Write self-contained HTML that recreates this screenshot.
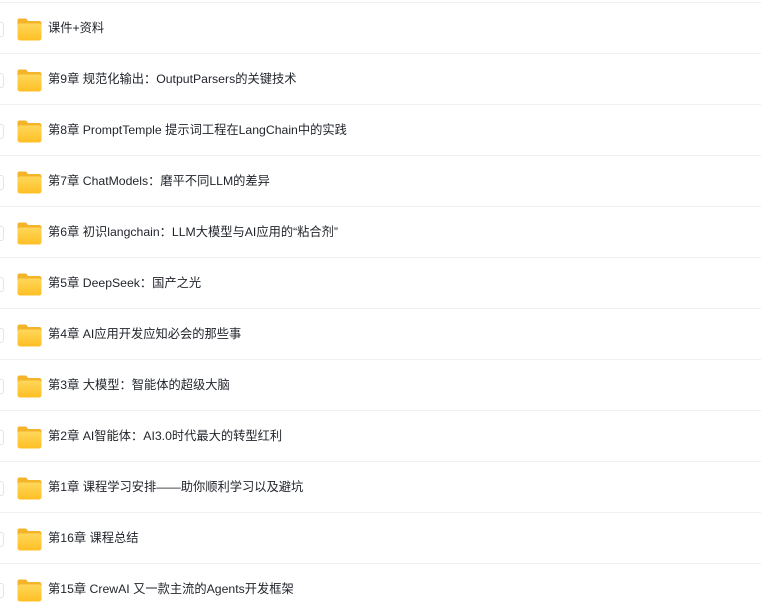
<!DOCTYPE html>
<html><head><meta charset="utf-8"><style>
body{margin:0;width:761px;height:604px;background:#fff;overflow:hidden;font-family:"Liberation Sans","Noto Sans CJK SC",sans-serif;}
.row{position:absolute;left:0;width:761px;height:51px;border-top:1px solid #eef0f4;}
.cb{position:absolute;left:-8px;top:19px;width:10px;height:13px;border:1px solid #e2e4e8;border-radius:3px;background:#fff;}
.ic{position:absolute;left:16px;top:12px;}
.t{position:absolute;left:48px;top:16px;font-size:12.25px;color:#1f2329;line-height:18px;white-space:nowrap;}
</style></head><body>
<div id="c"></div>
<script>
var t=["课件+资料","第9章 规范化输出：OutputParsers的关键技术","第8章 PromptTemple 提示词工程在LangChain中的实践","第7章 ChatModels：磨平不同LLM的差异","第6章 初识langchain：LLM大模型与AI应用的“粘合剂”","第5章 DeepSeek：国产之光","第4章 AI应用开发应知必会的那些事","第3章 大模型：智能体的超级大脑","第2章 AI智能体：AI3.0时代最大的转型红利","第1章 课程学习安排——助你顺利学习以及避坑","第16章 课程总结","第15章 CrewAI 又一款主流的Agents开发框架"];
var svg='<svg width="27" height="27" viewBox="0 0 27 27"><defs><linearGradient id="g" x1="0" y1="0" x2="0" y2="1"><stop offset="0" stop-color="#ffd75a"/><stop offset="1" stop-color="#ffbf24"/></linearGradient></defs><path d="M1.5 5.5Q1.5 3.5 3.5 3.5H10l2.2 2.5h10.8Q25.5 6 25.5 8.5v2H1.5z" fill="#f4b42a"/><rect x="1.5" y="8.5" width="24" height="17" rx="2.5" fill="url(#g)"/></svg>';
var h="";
for(var i=0;i<t.length;i++){h+='<div class="row" style="top:'+(2+51*i)+'px"><div class="cb"></div><div class="ic">'+svg+'</div><div class="t">'+t[i]+'</div></div>';}
document.getElementById("c").innerHTML=h;
</script>
</body></html>
